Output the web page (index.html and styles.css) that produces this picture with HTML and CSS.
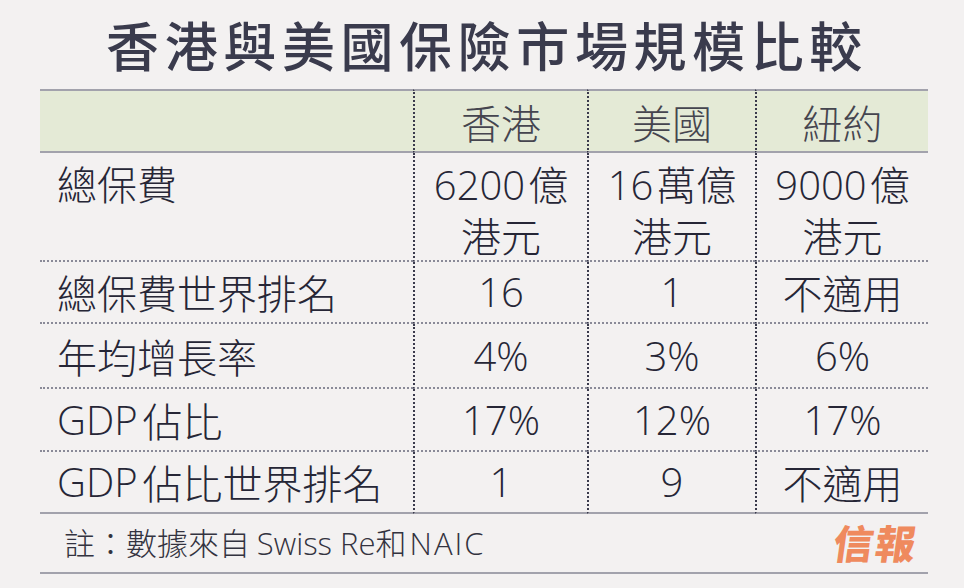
FILE: index.html
```html
<!DOCTYPE html>
<html lang="zh-Hant">
<head>
<meta charset="utf-8">
<title>香港與美國保險市場規模比較</title>
<link rel="stylesheet" href="styles.css">
</head>
<body>
<div class="page">
  <h1 class="title">香港與美國保險市場規模比較</h1>
  <div class="table">
    <div class="cell head first"></div>
    <div class="cell head">香港</div>
    <div class="cell head">美國</div>
    <div class="cell head">紐約</div>

    <div class="cell first top r1">總保費</div>
    <div class="cell top r1"><span class="val"><span class="num">6200</span>億<br>港元</span></div>
    <div class="cell top r1"><span class="val"><span class="num">16</span>萬億<br>港元</span></div>
    <div class="cell top r1"><span class="val"><span class="num">9000</span>億<br>港元</span></div>

    <div class="cell first">總保費世界排名</div>
    <div class="cell"><span class="num">16</span></div>
    <div class="cell"><span class="num">1</span></div>
    <div class="cell">不適用</div>

    <div class="cell first">年均增長率</div>
    <div class="cell"><span class="num">4%</span></div>
    <div class="cell"><span class="num">3%</span></div>
    <div class="cell"><span class="num">6%</span></div>

    <div class="cell first"><span class="num gdp">GDP</span>佔比</div>
    <div class="cell"><span class="num">17%</span></div>
    <div class="cell"><span class="num">12%</span></div>
    <div class="cell"><span class="num">17%</span></div>

    <div class="cell first last"><span class="num gdp">GDP</span>佔比世界排名</div>
    <div class="cell last"><span class="num">1</span></div>
    <div class="cell last"><span class="num">9</span></div>
    <div class="cell last">不適用</div>
  </div>
  <div class="note">
    <p class="note-text">註：數據來自 <span class="num">Swiss Re</span>和<span class="num naic">NAIC</span></p>
    <span class="logo">信報</span>
  </div>
</div>
</body>
</html>
```

FILE: styles.css
```css
html, body {
  margin: 0;
  padding: 0;
  background: #f3f1f1;
}

body {
  font-family: "Noto Sans CJK TC", "Open Sans", sans-serif;
  color: #2a2a3a;
}

.page {
  width: 888px;
  padding: 0 36px 0 40px;
}

.title {
  margin: 0;
  height: 89px;
  box-sizing: border-box;
  padding: 18px 0 0 6px;
  font-size: 53px;
  line-height: 53px;
  font-weight: 500;
  letter-spacing: 5.6px;
  text-align: center;
  color: #3a3b4d;
}

.table {
  display: grid;
  grid-template-columns: 373px 174px 168px 173px;
  grid-template-rows: 64px 109px 62px 65px 63px 62px;
}

.cell {
  box-sizing: border-box;
  display: flex;
  align-items: center;
  justify-content: center;
  font-size: 40px;
  line-height: 50px;
  font-weight: 300;
  color: #262636;
  border-bottom: 2px dotted #8a8a98;
  border-left: 2px dotted #3a3a4c;
  white-space: nowrap;
}

.cell.first {
  border-left: none;
  justify-content: flex-start;
  padding-left: 17px;
}

.cell.head {
  background: #e4ead6;
  color: #45454f;
  border-top: 2px solid #a2a2ac;
  border-bottom: 2px solid #a2a2ac;
  padding-top: 2px;
}

.cell.top {
  align-items: flex-start;
  padding-top: 5px;
}

.cell.last {
  border-bottom: 2px solid #a2a2ac;
}

.val {
  text-align: center;
}

.num {
  font-family: "Open Sans", "Noto Sans CJK TC", sans-serif;
  font-weight: 300;
}

.r1 .num {
  margin-right: 3px;
}

.gdp {
  margin-right: 5px;
}

.note {
  height: 60px;
  box-sizing: border-box;
  display: flex;
  align-items: center;
  justify-content: space-between;
  padding: 0 10px 2px 24px;
  border-bottom: 2px solid #a2a2ac;
}

.note-text {
  margin: 0;
  font-size: 31px;
  line-height: 40px;
  font-weight: 300;
  color: #333340;
}

.naic {
  letter-spacing: 2px;
  margin-left: 3px;
}

.logo {
  font-size: 40px;
  font-weight: 900;
  line-height: 44px;
  color: #ef8a5e;
  letter-spacing: 2px;
  transform: skewX(-8deg);
  display: inline-block;
}
```
